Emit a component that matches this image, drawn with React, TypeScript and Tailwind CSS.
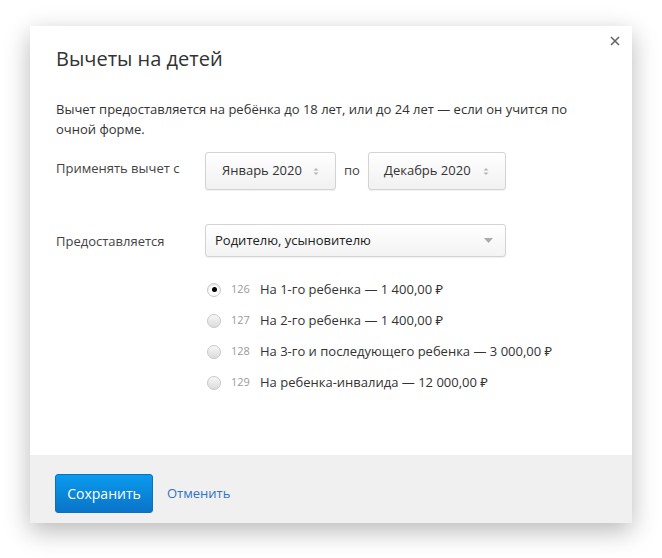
import React from "react";

const font = { fontFamily: '"Open Sans", "Noto Sans", sans-serif' };

function UpDown() {
  return (
    <svg width="6" height="9" viewBox="0 0 6 9" className="shrink-0">
      <path d="M3 1 L5.5 3.5 H0.5 Z" fill="#b5b5b5" />
      <path d="M3 8 L5.5 5.5 H0.5 Z" fill="#b5b5b5" />
    </svg>
  );
}

function Radio({ checked }: { checked?: boolean }) {
  return (
    <span
      className={
        "flex h-[14px] w-[14px] shrink-0 items-center justify-center rounded-full border border-[#c8c8c8] " +
        (checked
          ? "bg-white shadow-[inset_0_1px_2px_rgba(0,0,0,0.15)]"
          : "bg-gradient-to-b from-[#f7f7f7] to-[#dcdcdc]")
      }
    >
      {checked && <span className="h-[5px] w-[5px] rounded-full bg-black" />}
    </span>
  );
}

const options = [
  { n: "126", t: "На 1-го ребенка — 1 400,00 ₽", c: true },
  { n: "127", t: "На 2-го ребенка — 1 400,00 ₽" },
  { n: "128", t: "На 3-го и последующего ребенка — 3 000,00 ₽" },
  { n: "129", t: "На ребенка-инвалида — 12 000,00 ₽" },
];

export default function App() {
  return (
    <div className="h-[558px] w-[662px] bg-white pl-[30px] pt-[26px]" style={font}>
      <div className="relative flex h-[497px] w-[602px] flex-col bg-white shadow-[0_8px_24px_rgba(0,0,0,0.28)]">
        <button className="absolute right-[12px] top-[10px] flex h-[10px] w-[10px] items-center justify-center">
          <svg width="10" height="10" viewBox="0 0 10 10">
            <path d="M1 1 L9 9 M9 1 L1 9" stroke="#666" strokeWidth="1.6" />
          </svg>
        </button>
        <div className="flex-1 px-[26px] pt-[19px]">
          <h1 className="text-[20px] leading-[28px] text-[#333]">Вычеты на детей</h1>
          <p className="mt-[26px] text-[13px] leading-[20px] text-[#333]">
            Вычет предоставляется на ребёнка до 18 лет, или до 24 лет — если он учится по
            <br />
            очной форме.
          </p>
          <div className="mt-[13px] flex items-start">
            <div className="w-[149px] pt-[6px] text-[13px] leading-[20px] text-[#444]">Применять вычет с</div>
            <div className="flex h-[38px] w-[131px] items-center justify-between rounded-[3px] border border-[#d3d3d3] bg-gradient-to-b from-white to-[#f1f1f1] pl-[16px] pr-[16px] text-[13px] text-[#333] shadow-[0_1px_1px_rgba(0,0,0,0.06)]">
              <span>Январь 2020</span>
              <UpDown />
            </div>
            <div className="flex h-[38px] w-[32px] items-center justify-center text-[13px] text-[#444]">по</div>
            <div className="flex h-[38px] w-[138px] items-center justify-between rounded-[3px] border border-[#d3d3d3] bg-gradient-to-b from-white to-[#f1f1f1] pl-[15px] pr-[16px] text-[13px] text-[#333] shadow-[0_1px_1px_rgba(0,0,0,0.06)]">
              <span>Декабрь 2020</span>
              <UpDown />
            </div>
          </div>
          <div className="mt-[34px] flex items-center">
            <div className="w-[149px] text-[13px] leading-[20px] text-[#444]">Предоставляется</div>
            <div className="flex h-[33px] w-[301px] items-center justify-between rounded-[3px] border border-[#d3d3d3] bg-gradient-to-b from-white to-[#f3f3f3] pl-[9px] pr-[12px] text-[13px] text-[#222] shadow-[0_1px_1px_rgba(0,0,0,0.06)]">
              <span>Родителю, усыновителю</span>
              <svg width="9" height="5" viewBox="0 0 9 5">
                <path d="M0 0 H9 L4.5 5 Z" fill="#aaa" />
              </svg>
            </div>
          </div>
          <div className="ml-[151px] mt-[17px] flex flex-col">
            {options.map((o) => (
              <div key={o.n} className="flex h-[31px] items-center">
                <Radio checked={o.c} />
                <span className="ml-[10px] w-[29px] text-[11px] text-[#9a9a9a]">{o.n}</span>
                <span className="text-[13px] text-[#333]">{o.t}</span>
              </div>
            ))}
          </div>
        </div>
        <div className="h-[68px] bg-[#f0f0f0] pl-[25px] pt-[19px]">
          <div className="flex items-center">
            <button className="h-[39px] w-[98px] rounded-[3px] border border-[#0a70c0] bg-gradient-to-b from-[#0a9bee] to-[#0a74c8] text-[14px] text-white">
              Сохранить
            </button>
            <a className="ml-[14px] text-[13px] text-[#2f73cc]">Отменить</a>
          </div>
        </div>
      </div>
    </div>
  );
}
